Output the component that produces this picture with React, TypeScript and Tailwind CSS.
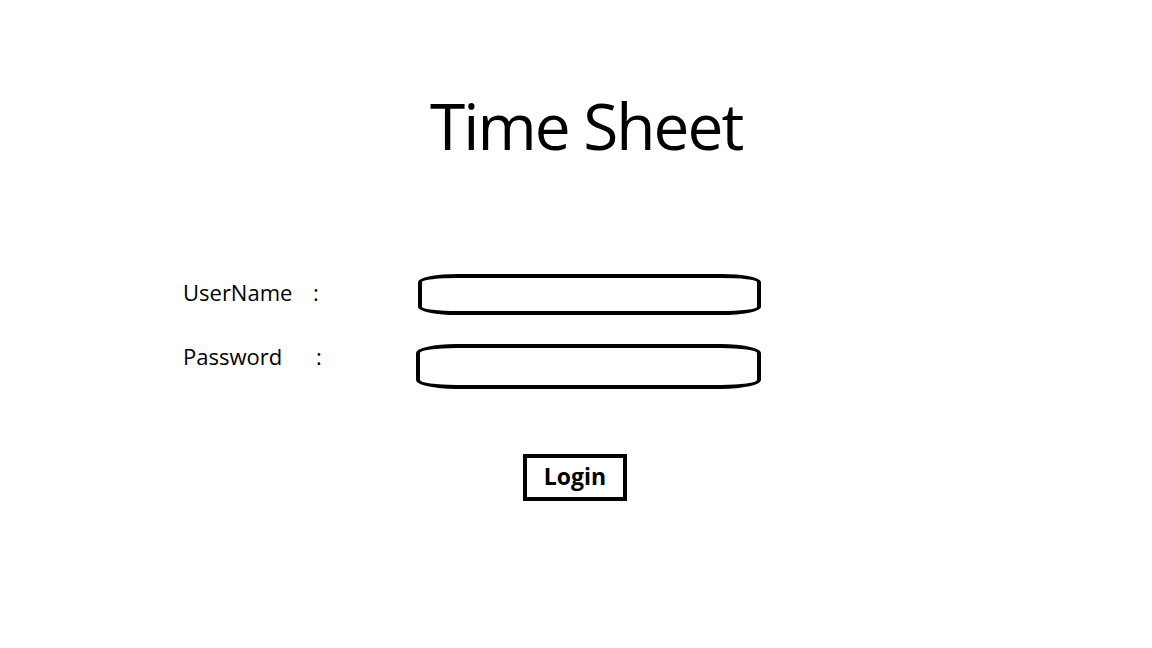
import React from "react";

export default function App() {
  return (
    <div
      className="w-[1152px] h-[648px] bg-white text-black overflow-hidden"
      style={{ fontFamily: '"Open Sans", "Noto Sans", sans-serif' }}
    >
      <div className="pt-[86px] pl-[430px]">
        <h1 className="text-[64px] leading-[80px] font-normal tracking-[-2px]">Time Sheet</h1>
      </div>

      <div className="mt-[108px] pl-[183px] flex flex-col gap-[29px]">
        <div className="flex items-start">
          <span className="w-[130px] text-[22px] leading-[30px] mt-[3px]">UserName</span>
          <span className="w-[105px] text-[22px] leading-[30px] mt-[3px]">:</span>
          <input className="w-[343px] h-[41px] border-4 border-black rounded-[40px/8px] outline-none px-3" />
        </div>
        <div className="flex items-start">
          <span className="w-[133px] text-[22px] leading-[30px] mt-[-3px]">Password</span>
          <span className="w-[100px] text-[22px] leading-[30px] mt-[-3px]">:</span>
          <input
            type="password"
            className="w-[345px] h-[45px] border-4 border-black rounded-[40px/9px] outline-none px-3"
          />
        </div>
      </div>

      <div className="mt-[65px] pl-[523px]">
        <button className="w-[104px] h-[47px] border-4 border-black bg-white text-[23px] font-bold leading-none pb-[2px]">
          Login
        </button>
      </div>
    </div>
  );
}
